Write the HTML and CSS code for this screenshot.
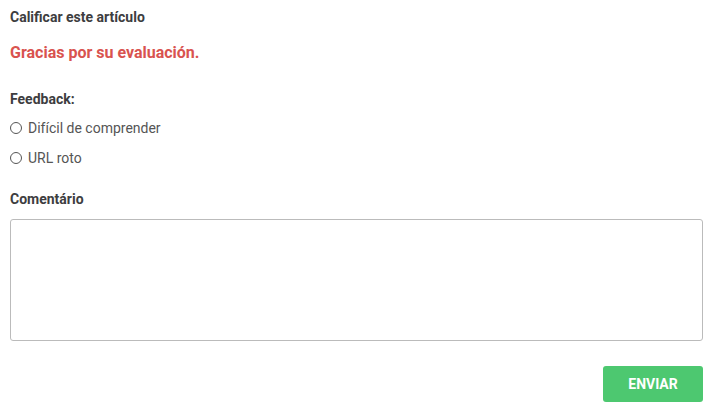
FILE: index.html
```html
<!DOCTYPE html>
<html lang="es">

<head>
    <meta charset="UTF-8">
    <meta name="viewport" content="width=device-width, initial-scale=1.0">
    <link rel="stylesheet" href="styles.css">
    <title>Calificar este artículo</title>
</head>

<body>
    <div class="rating">
        <h4 class="title">Calificar este artículo</h4>
        <p class="thanks">Gracias por su evaluación.</p>

        <div class="feedback">
            <strong class="label">Feedback:</strong>
            <label class="option"><input type="radio" name="feedback"> Difícil de comprender</label>
            <label class="option"><input type="radio" name="feedback"> URL roto</label>
        </div>

        <strong class="label">Comentário</strong>
        <textarea class="comment"></textarea>

        <div class="actions">
            <button class="send">ENVIAR</button>
        </div>
    </div>
</body>

</html>
```

FILE: styles.css
```css
body {
  margin: 0;
}

.rating,
.rating * {
  font-family: Roboto, "Liberation Sans", sans-serif;
}

.rating {
  padding: 7px 21px 8px 10px;
  color: #444;
}

.title {
  margin: 0;
  font-size: 14px;
  font-weight: 700;
  line-height: 20px;
  color: #3d3d40;
}

.thanks {
  margin: 15px 0 0;
  font-size: 16px;
  font-weight: 700;
  line-height: 22px;
  color: #d9534f;
}

.feedback {
  margin-top: 25px;
}

.label {
  display: block;
  font-size: 14px;
  font-weight: 700;
  line-height: 20px;
  color: #3d3d40;
}

.feedback .label {
  margin-bottom: 4px;
}

.option {
  display: flex;
  align-items: center;
  gap: 6px;
  height: 30px;
  font-size: 14px;
  color: #555;
}

.option input {
  appearance: none;
  margin: 0;
  width: 12px;
  height: 12px;
  border: 1px solid #555;
  border-radius: 50%;
  box-sizing: border-box;
}

.feedback + .label {
  margin-top: 16px;
}

.comment {
  display: block;
  width: 100%;
  height: 122px;
  margin-top: 10px;
  border: 1px solid #bbb;
  border-radius: 3px;
  box-sizing: border-box;
  resize: none;
}

.actions {
  display: flex;
  justify-content: flex-end;
  margin-top: 25px;
}

.send {
  width: 100px;
  height: 36px;
  border: 0;
  border-radius: 3px;
  background: #4dc870;
  color: #fff;
  font-size: 14px;
  font-weight: 700;
}
```
